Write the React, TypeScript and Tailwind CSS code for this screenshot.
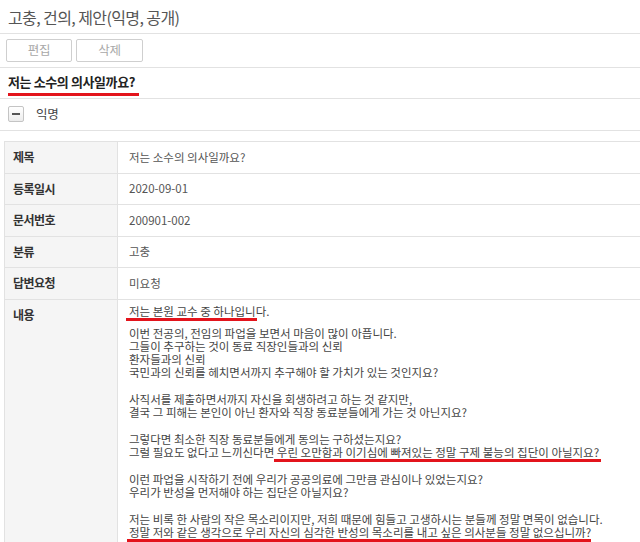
import React from "react";

function Mark({
  children,
  bar,
}: {
  children: React.ReactNode;
  bar: string;
}) {
  return (
    <span className="relative inline-block">
      {children}
      <span className={"absolute h-[2.5px] bg-[#e3141c] " + bar} />
    </span>
  );
}

const rows: [string, string][] = [
  ["제목", "저는 소수의 의사일까요?"],
  ["등록일시", "2020-09-01"],
  ["문서번호", "200901-002"],
  ["분류", "고충"],
  ["답변요청", "미요청"],
];

export default function App() {
  return (
    <div className="w-[640px] h-[542px] overflow-hidden bg-white font-['Noto_Sans_CJK_KR',sans-serif] text-[#444]">
      {/* Title */}
      <div className="h-[34px] border-b border-[#e2e2e2] pl-[8px] flex items-center text-[16px] tracking-[-0.6px] text-[#555]">
        고충, 건의, 제안(익명, 공개)
      </div>

      {/* Buttons */}
      <div className="h-[34px] border-b border-[#e2e2e2] pt-[5px] pl-[6px] flex gap-[4px]">
        <button className="w-[66px] h-[23px] border border-[#cfcfcf] rounded-[2px] bg-white text-[12.5px] tracking-[-0.2px] text-[#a8a8a8] flex items-center justify-center">
          편집
        </button>
        <button className="w-[67px] h-[23px] border border-[#cfcfcf] rounded-[2px] bg-white text-[12.5px] tracking-[-0.2px] text-[#a8a8a8] flex items-center justify-center">
          삭제
        </button>
      </div>

      {/* Subject */}
      <div className="h-[31px] border-b border-[#e2e2e2] pl-[8px] pt-[6px] flex items-start">
        <Mark bar="top-[19px] left-0 -right-[4px]">
          <span className="block leading-[16px] text-[13px] font-bold tracking-[-0.4px] text-[#222]">
            저는 소수의 의사일까요?
          </span>
        </Mark>
      </div>

      {/* Anonymous */}
      <div className="h-[32px] border-b border-[#e2e2e2] pl-[8px] pt-[7px] flex items-start gap-[12px]">
        <span className="w-[16px] h-[16px] border border-[#c4c4c4] rounded-[2px] bg-gradient-to-b from-white to-[#ececec] flex items-center justify-center">
          <span className="block w-[8px] h-[2px] bg-[#555]" />
        </span>
        <span className="text-[12.5px] leading-[16px] tracking-[-0.3px] text-[#444]">익명</span>
      </div>

      <div className="h-[10px]" />

      {/* Table */}
      <div className="ml-[4px] w-[700px] border-t border-l border-[#e2e2e2]">
        {rows.map(([k, v]) => (
          <div key={k} className="grid grid-cols-[113px_1fr] h-[31.5px] border-b border-[#e2e2e2]">
            <div className="bg-[#f5f5f5] border-r border-[#e2e2e2] pl-[8px] flex items-center text-[12px] font-bold tracking-[-0.5px] text-[#333]">
              {k}
            </div>
            <div className="pl-[11px] flex items-center text-[11.5px] text-[#555]">
              {v}
            </div>
          </div>
        ))}
        <div className="grid grid-cols-[113px_1fr] border-b border-[#e2e2e2]">
          <div className="bg-[#f5f5f5] border-r border-[#e2e2e2] pl-[8px] pt-[8px] text-[12px] leading-[13px] font-bold tracking-[-0.5px] text-[#333]">
            내용
          </div>
          <div className="pl-[11px] pt-[5px] pb-[8px] text-[11.5px] leading-[13px] text-[#444] whitespace-nowrap">
            <div className="mb-[9px]">
              <Mark bar="top-[13.5px] -left-[3px] -right-[1px]">저는 본원 교수 중 하나입니</Mark>
              다.
            </div>
            <div>이번 전공의, 전임의 파업을 보면서 마음이 많이 아픕니다.</div>
            <div>그들이 추구하는 것이 동료 직장인들과의 신뢰</div>
            <div>환자들과의 신뢰</div>
            <div>국민과의 신뢰를 헤치면서까지 추구해야 할 가치가 있는 것인지요?</div>
            <div className="mt-[14px]">사직서를 제출하면서까지 자신을 회생하려고 하는 것 같지만,</div>
            <div>결국 그 피해는 본인이 아닌 환자와 직장 동료분들에게 가는 것 아닌지요?</div>
            <div className="mt-[14px]">그렇다면 최소한 직장 동료분들에게 동의는 구하셨는지요?</div>
            <div>
              그럴 필요도 없다고 느끼신다면{" "}
              <Mark bar="top-[13.5px] -left-[3px] -right-[2px]">
                우린 오만함과 이기심에 빠져있는 정말 구제 불능의 집단이 아닐지요?
              </Mark>
            </div>
            <div className="mt-[14px]">이런 파업을 시작하기 전에 우리가 공공의료에 그만큼 관심이나 있었는지요?</div>
            <div>우리가 반성을 먼저해야 하는 집단은 아닐지요?</div>
            <div className="mt-[14px]">
              저는 비록 한 사람의 작은 목소리이지만, 저희 때문에 힘들고 고생하시는 분들께 정말 면목이 없습니다.
            </div>
            <div>
              <Mark bar="top-[13.5px] -left-[2px] right-0">
                정말 저와 같은 생각으로 우리 자신의 심각한 반성의 목소리를 내고 싶은 의사분들 정말 없으십니까?
              </Mark>
            </div>
          </div>
        </div>
      </div>
    </div>
  );
}
